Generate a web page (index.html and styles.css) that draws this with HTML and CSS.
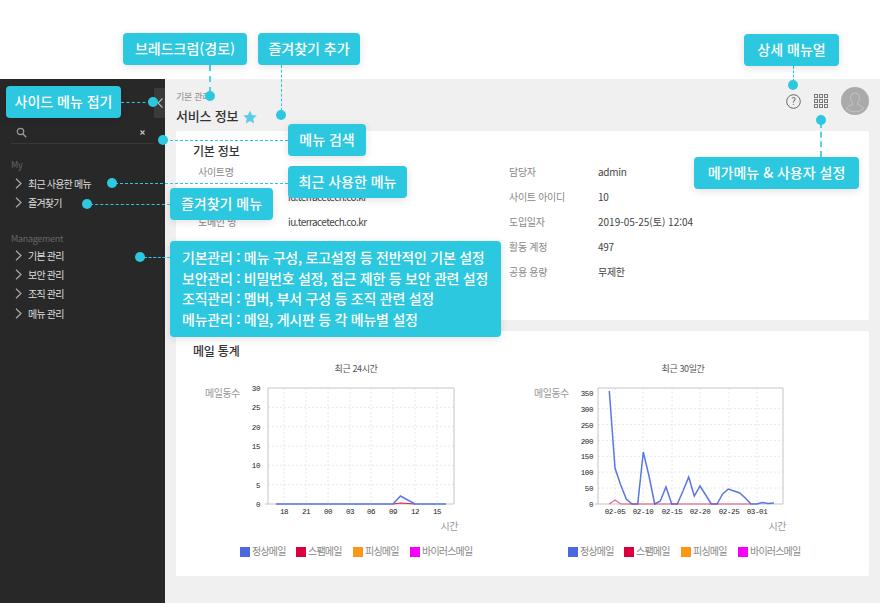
FILE: index.html
```html
<!DOCTYPE html>
<html lang="ko">

<head>
  <meta charset="UTF-8">
  <meta name="viewport" content="width=device-width, initial-scale=1.0">
  <title>서비스 정보</title>
  <link rel="stylesheet" href="styles.css">
</head>

<body>
  <div class="page">
    <div class="top-space"></div>

    <div class="layout">
      <aside class="sidebar">
        <button class="collapse" type="button">
          <svg width="6" height="10" viewBox="0 0 6 10"><path d="M5.500.5 1 5l4.500 4.500" fill="none" stroke="#bbb" stroke-width="1.1"/></svg>
        </button>
        <div class="search">
          <svg width="11" height="11" viewBox="0 0 11 11"><circle cx="4.500" cy="4.500" r="3.200" fill="none" stroke="#999" stroke-width="1.200"/><path d="m7 7 3.200 3.200" stroke="#999" stroke-width="1.400"/></svg>
          <svg width="7" height="7" viewBox="0 0 7 7"><path d="m1.500 1.500 4 4m0-4-4 4" stroke="#c4c4c4" stroke-width="1.100"/></svg>
        </div>
        <p class="menu-group">My</p>
        <ul class="menu">
          <li><svg class="chev" width="7" height="11" viewBox="0 0 7 11"><path d="m1 .8 5 4.700-5 4.700" /></svg>최근 사용한 메뉴</li>
          <li><svg class="chev" width="7" height="11" viewBox="0 0 7 11"><path d="m1 .8 5 4.700-5 4.700" /></svg>즐겨찾기</li>
        </ul>
        <p class="menu-group menu-group-second">Management</p>
        <ul class="menu menu-second">
          <li><svg class="chev" width="7" height="11" viewBox="0 0 7 11"><path d="m1 .8 5 4.700-5 4.700" /></svg>기본 관리</li>
          <li><svg class="chev" width="7" height="11" viewBox="0 0 7 11"><path d="m1 .8 5 4.700-5 4.700" /></svg>보안 관리</li>
          <li><svg class="chev" width="7" height="11" viewBox="0 0 7 11"><path d="m1 .8 5 4.700-5 4.700" /></svg>조직 관리</li>
          <li><svg class="chev" width="7" height="11" viewBox="0 0 7 11"><path d="m1 .8 5 4.700-5 4.700" /></svg>메뉴 관리</li>
        </ul>
      </aside>

      <main class="content">
        <header class="content-head">
          <div>
            <p class="breadcrumb">기본 관리</p>
            <h1 class="page-title">서비스 정보
              <svg class="star" width="14" height="14" viewBox="0 0 14 14"><path d="M7 .5 9 5l4.800.5-3.600 3.200 1 4.800L7 11l-4.200 2.500 1-4.800L.2 5.500 5 5z" fill="#5acce8"/></svg>
            </h1>
          </div>
          <div class="head-tools">
            <svg width="15" height="15" viewBox="0 0 15 15"><circle cx="7.500" cy="7.500" r="6.800" fill="none" stroke="#666" stroke-width="1"/><text x="7.500" y="10.800" class="help-mark">?</text></svg>
            <svg width="14" height="14" viewBox="0 0 14 14" class="grid-icon">
              <rect x=".5" y=".5" width="3" height="3"/><rect x="5.500" y=".5" width="3" height="3"/><rect x="10.500" y=".5" width="3" height="3"/>
              <rect x=".5" y="5.500" width="3" height="3"/><rect x="5.500" y="5.500" width="3" height="3"/><rect x="10.500" y="5.500" width="3" height="3"/>
              <rect x=".5" y="10.500" width="3" height="3"/><rect x="5.500" y="10.500" width="3" height="3"/><rect x="10.500" y="10.500" width="3" height="3"/>
            </svg>
            <svg width="28" height="28" viewBox="0 0 28 28"><circle cx="14" cy="14" r="14" fill="#aaa"/><path d="M14 6c-3 0-4.500 2.200-4.500 5 0 2 .8 3.800 2 5v1.500c-2.500 1-5.500 1.800-6 4.500a14 14 0 0 0 17 0c-.5-2.700-3.500-3.500-6-4.500V16c1.200-1.200 2-3 2-5 0-2.800-1.500-5-4.500-5z" fill="none" stroke="#c4c4c4" stroke-width="1"/></svg>
          </div>
        </header>

        <section class="card card-info">
          <h2 class="card-title">기본 정보</h2>
          <div class="info-grid">
            <span class="info-label">사이트명</span><span></span>
            <span class="info-label">담당자</span><span class="info-value">admin</span>
            <span></span><span class="info-value info-tight">iu.terracetech.co.kr</span>
            <span class="info-label">사이트 아이디</span><span class="info-value">10</span>
            <span class="info-label">도메인 명</span><span class="info-value info-tight">iu.terracetech.co.kr</span>
            <span class="info-label">도입일자</span><span class="info-value info-date">2019-05-25(토) 12:04</span>
            <span></span><span></span>
            <span class="info-label">활동 계정</span><span class="info-value">497</span>
            <span></span><span></span>
            <span class="info-label">공용 용량</span><span class="info-value">무제한</span>
          </div>
        </section>

        <section class="card card-stats">
          <h2 class="card-title">메일 통계</h2>
          <div class="charts">
            <svg class="chart" width="300" height="204" viewBox="0 0 300 204">
              <text x="166" y="12" class="chart-title">최근 24시간</text>
              <text x="15" y="37" class="axis-name">메일동수</text>
              <g class="grid-lines">
                <path d="M78 47.300H264M78 66.700H264M78 86H264M78 105.300H264M78 124.700H264"/>
                <path d="M94 28V144M116 28V144M138 28V144M160 28V144M181 28V144M203 28V144M225 28V144M247 28V144"/>
              </g>
              <path class="plot-frame" d="M78 144V28H264V144H75"/>
              <g class="tick-y">
                <text x="70" y="31">30</text><text x="70" y="50">25</text><text x="70" y="70">20</text>
                <text x="70" y="89">15</text><text x="70" y="108">10</text><text x="70" y="128">5</text><text x="70" y="147">0</text>
              </g>
              <g class="tick-x">
                <text x="94" y="154">18</text><text x="116" y="154">21</text><text x="138" y="154">00</text><text x="160" y="154">03</text>
                <text x="181" y="154">06</text><text x="203" y="154">09</text><text x="225" y="154">12</text><text x="247" y="154">15</text>
              </g>
              <polyline class="line-spam" points="203,144 210.500,143 225,144"/>
              <polyline class="line-normal" points="86,144 203,144 210.500,136 225,144 256,144"/>
              <text x="268" y="170" class="axis-name axis-x">시간</text>
              <g class="legend">
                <rect x="50" y="187" width="10" height="10" fill="#4b68e0"/><text x="62" y="195">정상메일</text>
                <rect x="106" y="187" width="10" height="10" fill="#dc0040"/><text x="118" y="195">스팸메일</text>
                <rect x="163" y="187" width="10" height="10" fill="#fb9616"/><text x="175" y="195">피싱메일</text>
                <rect x="220" y="187" width="10" height="10" fill="#f800f8"/><text x="232" y="195">바이러스메일</text>
              </g>
            </svg>

            <svg class="chart" width="300" height="204" viewBox="0 0 300 204">
              <text x="163" y="12" class="chart-title">최근 30일간</text>
              <text x="14" y="37" class="axis-name">메일동수</text>
              <g class="grid-lines">
                <path d="M78 48.700H263M78 64.600H263M78 80.400H263M78 96.300H263M78 112.100H263M78 128H263"/>
                <path d="M95 28V144M123 28V144M152 28V144M180 28V144M209 28V144M237 28V144"/>
              </g>
              <path class="plot-frame" d="M78 144V28H263V144H75"/>
              <g class="tick-y">
                <text x="73" y="36">350</text><text x="73" y="52">300</text><text x="73" y="68">250</text><text x="73" y="84">200</text>
                <text x="73" y="99">150</text><text x="73" y="115">100</text><text x="73" y="131">50</text><text x="73" y="147">0</text>
              </g>
              <g class="tick-x">
                <text x="95" y="154">02-05</text><text x="123" y="154">02-10</text><text x="152" y="154">02-15</text>
                <text x="180" y="154">02-20</text><text x="209" y="154">02-25</text><text x="237" y="154">03-01</text>
              </g>
              <polyline class="line-normal" points="89.300,31 95,108 100.700,125 106.300,139 112,144 117.700,144 123.300,92 129,116 134.700,144 140.300,141 146,127 151.700,144 157.300,144 163,131 168.700,117 174.300,136 180,126 185.700,135 191.300,144 197,144 202.700,134 208.300,129 214,131 219.700,133 225.300,138 231,144 236.700,144 242.300,142.500 248,143.500 254,143"/>
              <polyline class="line-spam line-spam-over" points="89.300,144 95,140 101,144 231,144"/>
              <text x="266" y="170" class="axis-name axis-x">시간</text>
              <g class="legend">
                <rect x="48" y="187" width="10" height="10" fill="#4b68e0"/><text x="60" y="195">정상메일</text>
                <rect x="104" y="187" width="10" height="10" fill="#dc0040"/><text x="116" y="195">스팸메일</text>
                <rect x="161" y="187" width="10" height="10" fill="#fb9616"/><text x="173" y="195">피싱메일</text>
                <rect x="218" y="187" width="10" height="10" fill="#f800f8"/><text x="230" y="195">바이러스메일</text>
              </g>
            </svg>
          </div>
        </section>
      </main>
    </div>

    <!-- annotation layer -->
    <span class="link link-v l-brand"></span>
    <span class="link link-v l-fav"></span>
    <span class="link link-v l-manual"></span>
    <span class="link link-v l-mega"></span>
    <span class="link link-h l-side"></span>
    <span class="link link-h l-search"></span>
    <span class="link link-h l-recent"></span>
    <span class="link link-h l-favmenu"></span>
    <span class="link link-h l-manage"></span>

    <span class="dot d-brand"></span>
    <span class="dot d-fav"></span>
    <span class="dot d-side"></span>
    <span class="dot d-search"></span>
    <span class="dot d-recent"></span>
    <span class="dot d-favmenu"></span>
    <span class="dot d-manage"></span>
    <span class="dot d-manual"></span>
    <span class="dot d-mega"></span>

    <div class="callout c-brand">브레드크럼(경로)</div>
    <div class="callout c-fav">즐겨찾기 추가</div>
    <div class="callout c-side">사이드 메뉴 접기</div>
    <div class="callout c-search">메뉴 검색</div>
    <div class="callout c-recent">최근 사용한 메뉴</div>
    <div class="callout c-favmenu">즐겨찾기 메뉴</div>
    <div class="callout c-manual">상세 매뉴얼</div>
    <div class="callout c-mega">메가메뉴 &amp; 사용자 설정</div>
    <div class="callout c-manage">
      <p>기본관리 : 메뉴 구성, 로고설정 등 전반적인 기본 설정</p>
      <p>보안관리 : 비밀번호 설정, 접근 제한 등 보안 관련 설정</p>
      <p>조직관리 : 멤버, 부서 구성 등 조직 관련 설정</p>
      <p>메뉴관리 : 메일, 게시판 등 각 메뉴별 설정</p>
    </div>
  </div>
</body>

</html>
```

FILE: styles.css
```css
* {
  box-sizing: border-box;
}

body {
  margin: 0;
  background-color: #fff;
  font-family: "Noto Sans CJK KR", "Noto Sans", sans-serif;
  color: #333;
}

p,
h1,
h2,
ul {
  margin: 0;
  padding: 0;
}

.page {
  position: relative;
  width: 880px;
  height: 603px;
  overflow: hidden;
}

.top-space {
  height: 79px;
}

.layout {
  display: flex;
  height: 524px;
}

/* sidebar */
.sidebar {
  position: relative;
  width: 165px;
  flex: none;
  padding: 42px 11px 0;
  background-color: #282828;
}

.collapse {
  position: absolute;
  top: 9px;
  right: 0;
  display: flex;
  align-items: center;
  justify-content: center;
  width: 11px;
  height: 30px;
  padding: 0;
  border: none;
  background-color: #3a3a3a;
}

.search {
  display: flex;
  align-items: center;
  justify-content: space-between;
  height: 23px;
  padding: 0 8px 0 5px;
  border-bottom: 1px solid #383838;
}

.menu-group {
  margin-top: 14px;
  color: #666;
  font-size: 9px;
  line-height: 14px;
  letter-spacing: -0.3px;
}

.menu-group-second {
  margin-top: 19px;
}

.menu {
  margin-top: 2px;
  list-style: none;
}

.menu-second {
  margin-top: 0;
}

.menu li {
  display: flex;
  align-items: center;
  gap: 6px;
  height: 19.3px;
  padding-left: 4px;
  color: #ddd;
  font-size: 10px;
  letter-spacing: -0.8px;
  white-space: nowrap;
}

.chev path {
  fill: none;
  stroke: #aaa;
  stroke-width: 1.2;
}

/* main */
.content {
  flex: 1;
  padding: 0 11px 0 11px;
  background-color: #f0f0f0;
}

.content-head {
  display: flex;
  justify-content: space-between;
  height: 52px;
  padding-top: 11px;
}

.breadcrumb {
  color: #888;
  font-size: 9px;
  line-height: 14px;
  letter-spacing: -0.3px;
}

.page-title {
  display: flex;
  align-items: center;
  gap: 5px;
  margin-top: 3px;
  font-size: 13px;
  font-weight: 500;
  line-height: 18px;
  letter-spacing: -0.2px;
}

.star {
  margin-top: 2px;
}

.head-tools {
  display: flex;
  align-items: center;
  gap: 13px;
  height: 28px;
  margin-top: -3px;
}

.help-mark {
  fill: #666;
  font-size: 10px;
  text-anchor: middle;
}

.grid-icon rect {
  fill: none;
  stroke: #777;
  stroke-width: 1;
}

.card {
  padding: 12px 17px 0;
  background-color: #fff;
  border-radius: 2px;
}

.card-info {
  height: 189px;
}

.card-stats {
  height: 245px;
  margin-top: 11px;
}

.card-title {
  font-size: 12px;
  font-weight: 500;
  line-height: 16px;
  letter-spacing: -0.2px;
}

.info-grid {
  display: grid;
  grid-template-columns: 90px 221px 89px 1fr;
  grid-auto-rows: 25px;
  align-items: center;
  padding-left: 5px;
  font-size: 10px;
  letter-spacing: -0.3px;
}

.info-label {
  color: #888;
}

.info-value {
  color: #444;
}

.info-tight {
  letter-spacing: -0.6px;
}

.info-date {
  letter-spacing: 0;
}

/* charts */
.charts {
  display: flex;
  gap: 30px;
  margin-left: -3px;
  margin-top: 1px;
}

.chart {
  flex: none;
  font-family: "Noto Sans CJK KR", "Noto Sans", sans-serif;
}

.chart-title {
  fill: #555;
  font-size: 9px;
  letter-spacing: -0.4px;
  text-anchor: middle;
}

.axis-name {
  fill: #999;
  font-size: 10px;
  letter-spacing: -0.5px;
}

.axis-x {
  text-anchor: end;
}

.grid-lines path {
  fill: none;
  stroke: #e8e8e8;
  stroke-width: 1;
  stroke-dasharray: 2 2;
}

.plot-frame {
  fill: none;
  stroke: #c4c4c4;
  stroke-width: 1;
}

.tick-y text,
.tick-x text {
  fill: #222;
  font-family: "Liberation Mono", monospace;
  font-size: 7.5px;
  letter-spacing: -0.4px;
}

.tick-y text {
  text-anchor: end;
}

.tick-x text {
  text-anchor: middle;
}

.line-normal {
  fill: none;
  stroke: #5a76e4;
  stroke-width: 1.5;
}

.line-spam {
  fill: none;
  stroke: #dc2050;
  stroke-width: 1.2;
}

.line-spam-over {
  opacity: 0.65;
}

.legend text {
  fill: #888;
  font-size: 10px;
  letter-spacing: -0.8px;
}

/* annotations */
.callout {
  position: absolute;
  height: 32px;
  border-radius: 4px;
  background-color: #2cc8e0;
  box-shadow: 0 2px 8px rgba(0, 0, 0, 0.12);
  color: #fff;
  font-size: 14px;
  font-weight: 500;
  line-height: 31px;
  text-align: center;
  white-space: nowrap;
}

.c-brand { left: 123px; top: 33px; width: 124px; }
.c-fav { left: 258px; top: 33px; width: 102px; }
.c-side { left: 6px; top: 86px; width: 115px; }
.c-search { left: 288px; top: 124px; width: 78px; }
.c-recent { left: 288px; top: 166px; width: 119px; }
.c-favmenu { left: 170px; top: 188px; width: 103px; }
.c-manual { left: 744px; top: 34px; width: 95px; }
.c-mega { left: 694px; top: 157px; width: 165px; }

.c-manage {
  left: 170px;
  top: 241px;
  width: 331px;
  height: 96px;
  padding: 6px 12px;
  line-height: 20.7px;
  letter-spacing: -0.25px;
  text-align: left;
}

.link {
  position: absolute;
  border: 0 dashed #2cc8e0;
}

.link-v {
  width: 0;
  border-left-width: 1px;
}

.link-h {
  height: 0;
  border-top-width: 1px;
}

.l-brand { left: 209px; top: 65px; height: 28px; border-left-width: 2px; opacity: 0.8; }
.l-fav { left: 281px; top: 65px; height: 46px; }
.l-manual { left: 793px; top: 66px; height: 16px; }
.l-mega { left: 820px; top: 122px; height: 35px; border-left-width: 2px; opacity: 0.8; }
.l-side { left: 121px; top: 102px; width: 30px; }
.l-search { left: 165px; top: 140px; width: 123px; }
.l-recent { left: 115px; top: 183px; width: 173px; }
.l-favmenu { left: 90px; top: 204px; width: 80px; }
.l-manage { left: 144px; top: 257px; width: 26px; }

.dot {
  position: absolute;
  width: 10px;
  height: 10px;
  border-radius: 50%;
  background-color: #2cc8e0;
}

.d-brand { left: 205px; top: 91px; }
.d-fav { left: 276px; top: 110px; }
.d-side { left: 148px; top: 97px; }
.d-search { left: 158px; top: 135px; }
.d-recent { left: 107px; top: 178px; }
.d-favmenu { left: 82px; top: 199px; }
.d-manage { left: 135px; top: 252px; }
.d-manual { left: 788px; top: 80px; }
.d-mega { left: 816px; top: 115px; }
```
